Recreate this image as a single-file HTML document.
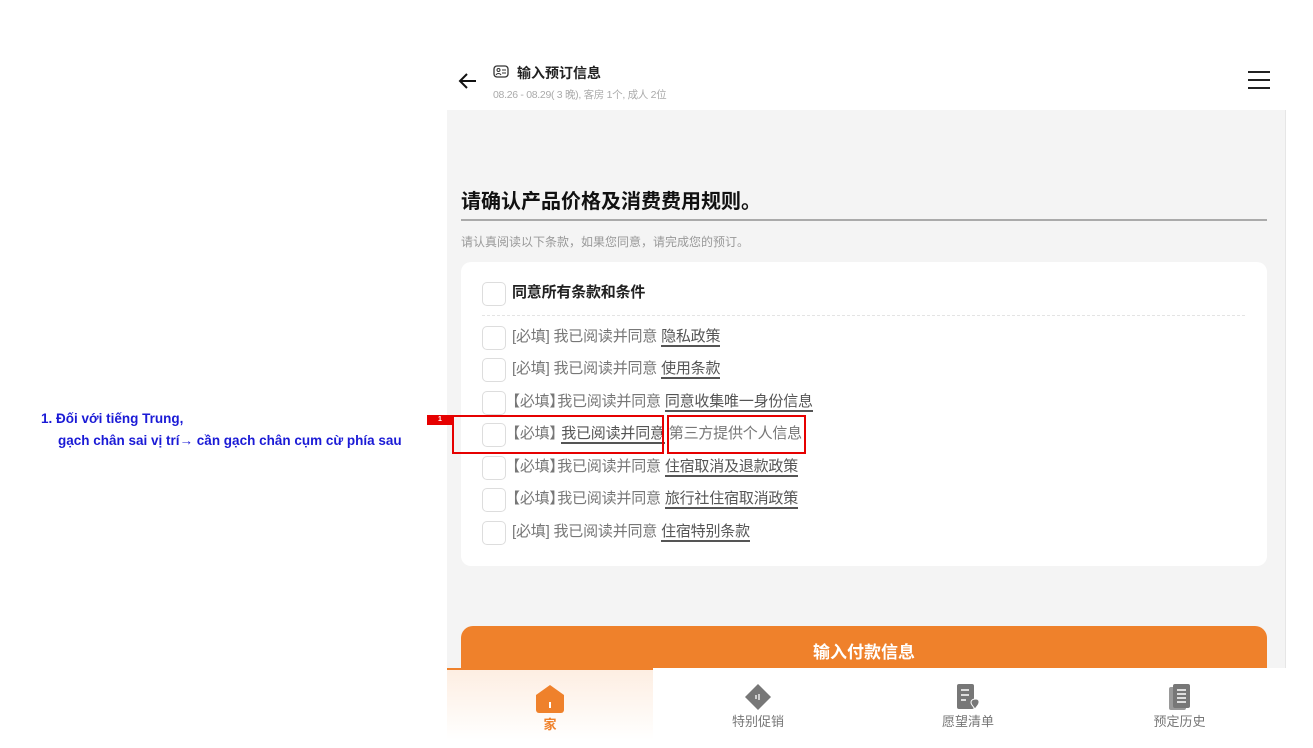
<!DOCTYPE html>
<html><head><meta charset="utf-8"><style>
*{margin:0;padding:0;box-sizing:border-box}
body{width:1313px;height:748px;background:#fff;position:relative;overflow:hidden;font-family:"Liberation Sans","Noto Sans CJK SC",sans-serif}
.abs{position:absolute}
.cb{position:absolute;left:482px;width:24px;height:24px;border:1px solid #ddd;border-radius:5px;background:#fff}
.row{position:absolute;left:512px;font-size:15px;color:#777;white-space:nowrap;line-height:20px;letter-spacing:-0.2px}
.row u{color:#555;text-decoration:none;border-bottom:2px solid #555}
.l{margin-left:-7px}
.r{margin-right:-7px}
.nav{position:absolute;top:668px;height:72px;text-align:center;font-size:13px;color:#777}
</style></head><body>
<div class="abs" style="left:447px;top:50px;width:839px;height:618px;background:#f4f4f4;border-right:1px solid #e6e6e6"></div>
<div class="abs" style="left:447px;top:50px;width:839px;height:60px;background:#fff"></div>
<svg class="abs" style="left:458px;top:72px" width="20" height="18" viewBox="0 0 20 18"><path d="M18 9H3M9 2L2 9l7 7" fill="none" stroke="#111" stroke-width="2"/></svg>
<svg class="abs" style="left:493px;top:65px" width="16" height="13" viewBox="0 0 16 13"><rect x="1" y="1" width="14" height="11" rx="3" fill="none" stroke="#333" stroke-width="1.3"/><circle cx="5.5" cy="5" r="1.5" fill="none" stroke="#333"/><path d="M3 10c1-2 4-2 5 0M9 5h4M9 8h4" stroke="#333" fill="none"/></svg>
<div class="abs" style="left:517px;top:63px;font-size:14px;font-weight:bold;color:#222">输入预订信息</div>
<div class="abs" style="left:493px;top:87px;font-size:10.5px;color:#aaa;letter-spacing:-0.3px">08.26 - 08.29( 3 晚), 客房 1个, 成人 2位</div>
<div class="abs" style="left:1248px;top:71px;width:22px;height:18px;border-top:2px solid #222;border-bottom:2px solid #222"></div>
<div class="abs" style="left:1248px;top:79px;width:22px;height:2px;background:#222"></div>
<div class="abs" style="left:461px;top:185px;font-size:20px;color:#111;font-weight:bold">请确认产品价格及消费费用规则。</div>
<div class="abs" style="left:461px;top:219px;width:806px;height:2px;background:#aaa"></div>
<div class="abs" style="left:461px;top:233px;font-size:12px;color:#999">请认真阅读以下条款，如果您同意，请完成您的预订。</div>
<div class="abs" style="left:461px;top:262px;width:806px;height:304px;background:#fff;border-radius:10px"></div>
<div class="cb" style="top:282px"></div>
<div class="row" style="top:283px;color:#222;font-weight:bold">同意所有条款和条件</div>
<div class="abs" style="left:482px;top:315px;width:763px;border-top:1px dashed #e4e4e4"></div>
<div class="cb" style="top:326px"></div><div class="row" style="top:327px">[必填] 我已阅读并同意 <u>隐私政策</u></div>
<div class="cb" style="top:358px"></div><div class="row" style="top:359px">[必填] 我已阅读并同意 <u>使用条款</u></div>
<div class="cb" style="top:391px"></div><div class="row" style="top:392px"><span class="l">【</span>必填<span class="r">】</span>我已阅读并同意 <u>同意收集唯一身份信息</u></div>
<div class="cb" style="top:423px"></div><div class="row" style="top:424px"><span class="l">【</span>必填<span class="r">】</span> <u>我已阅读并同意</u> 第三方提供个人信息</div>
<div class="cb" style="top:456px"></div><div class="row" style="top:457px"><span class="l">【</span>必填<span class="r">】</span>我已阅读并同意 <u>住宿取消及退款政策</u></div>
<div class="cb" style="top:488px"></div><div class="row" style="top:489px"><span class="l">【</span>必填<span class="r">】</span>我已阅读并同意 <u>旅行社住宿取消政策</u></div>
<div class="cb" style="top:521px"></div><div class="row" style="top:522px">[必填] 我已阅读并同意 <u>住宿特别条款</u></div>
<div class="abs" style="left:452px;top:415px;width:212px;height:39px;border:2px solid #e60000"></div>
<div class="abs" style="left:667px;top:415px;width:139px;height:39px;border:2px solid #e60000"></div>
<div class="abs" style="left:427px;top:415px;width:26px;height:10px;background:#e60000;color:#fff;font-size:7px;text-align:center;line-height:10px;font-weight:bold">1</div>
<div class="abs" style="left:41px;top:408px;font-size:13.5px;color:#1a1ad6;font-weight:bold;line-height:22px;white-space:nowrap">1. Đối với tiếng Trung,<br><span style="padding-left:17px">gạch chân sai vị trí→ cần gạch chân cụm cừ phía sau</span></div>
<div class="abs" style="left:461px;top:626px;width:806px;height:50px;background:#ef812b;border-radius:12px 12px 0 0;color:#fff;font-size:17px;font-weight:bold;text-align:center;line-height:54px">输入付款信息</div>
<div class="abs" style="left:447px;top:668px;width:839px;height:72px;background:#fff"></div>
<div class="nav" style="left:447px;width:206px;background:linear-gradient(#fdeee2,#fff);border-top:2px solid #ef812b;color:#ef812b;font-weight:bold">
<svg style="margin-top:14px" width="32" height="30" viewBox="0 0 32 30"><path d="M16 1L30 11V26a3 3 0 0 1-3 3H5a3 3 0 0 1-3-3V11z" fill="#ef812b"/><rect x="15" y="18" width="2" height="6" fill="#fff"/></svg><div style="margin-top:-3px">家</div></div>
<div class="nav" style="left:653px;width:210px"><svg style="margin-top:15px" width="28" height="28" viewBox="0 0 28 28"><path d="M14 1l13 13-13 13L1 14z" fill="#777"/><path d="M12 12v4M15 11v6" stroke="#fff" stroke-width="1.3"/></svg><div style="margin-top:-3px">特别促销</div></div>
<div class="nav" style="left:863px;width:210px"><svg style="margin-top:15px" width="28" height="28" viewBox="0 0 28 28"><rect x="3" y="1" width="17" height="25" rx="2" fill="#777"/><path d="M7 7h8M7 12h8M7 17h5" stroke="#fff" stroke-width="1.6"/><path d="M22 16c3 0 4 3 2 6l-3 4-3-4c-2-3-1-6 4-6z" fill="#777" stroke="#fff"/></svg><div style="margin-top:-3px">愿望清单</div></div>
<div class="nav" style="left:1073px;width:213px"><svg style="margin-top:15px" width="28" height="28" viewBox="0 0 28 28"><rect x="3" y="4" width="17" height="23" rx="2" fill="#999"/><rect x="7" y="1" width="17" height="24" rx="2" fill="#777"/><path d="M11 7h9M11 11h9M11 15h9M11 19h9" stroke="#fff" stroke-width="1.5"/></svg><div style="margin-top:-3px">预定历史</div></div>
</body></html>
